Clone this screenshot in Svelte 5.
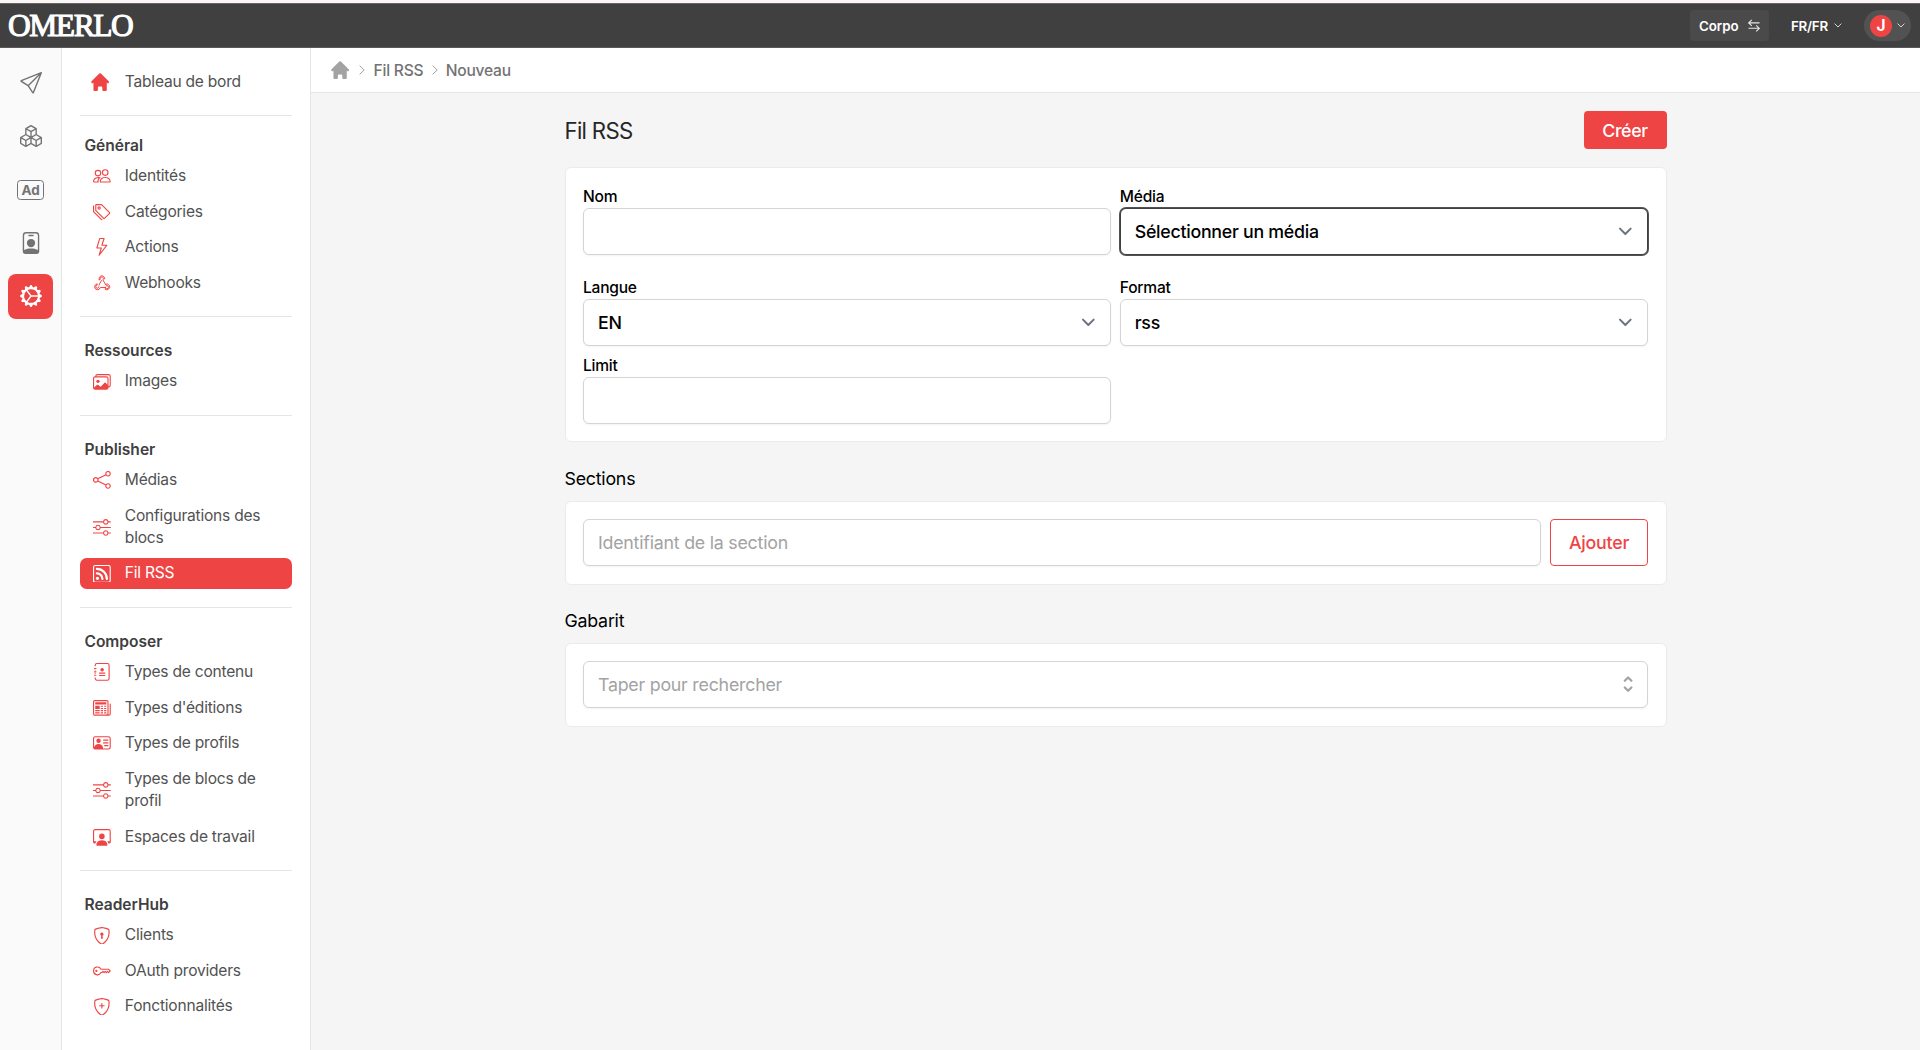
<script>
  // Inner markup of the icons, all on a 16x16 grid
  const shield =
    '<path d="M5.338 1.59a61 61 0 0 0-2.837.856.48.48 0 0 0-.328.39c-.554 4.157.726 7.19 2.253 9.188a10.7 10.7 0 0 0 2.287 2.233c.346.244.652.42.893.533q.18.085.293.118a1 1 0 0 0 .101.025 1 1 0 0 0 .1-.025q.114-.034.294-.118c.24-.113.547-.29.893-.533a10.7 10.7 0 0 0 2.287-2.233c1.527-1.997 2.807-5.031 2.253-9.188a.48.48 0 0 0-.328-.39c-.651-.213-1.75-.56-2.837-.855C9.552 1.29 8.531 1.067 8 1.067c-.53 0-1.552.223-2.662.524zM5.072.56C6.157.265 7.31 0 8 0s1.843.265 2.928.56c1.11.3 2.229.655 2.887.87a1.54 1.54 0 0 1 1.044 1.262c.596 4.477-.787 7.795-2.465 9.99a11.8 11.8 0 0 1-2.517 2.453 7 7 0 0 1-1.048.625c-.28.132-.581.24-.829.24s-.548-.108-.829-.24a7 7 0 0 1-1.048-.625 11.8 11.8 0 0 1-2.517-2.453C1.928 10.487.545 7.169 1.141 2.692A1.54 1.54 0 0 1 2.185 1.43 63 63 0 0 1 5.072.56"/>';

  const icons = {
    send: '<path d="M15.854.146a.5.5 0 0 1 .11.54l-5.819 14.547a.75.75 0 0 1-1.329.124l-3.178-4.995L.643 7.184a.75.75 0 0 1 .124-1.33L15.314.037a.5.5 0 0 1 .54.11ZM6.636 10.07l2.761 4.338L14.13 2.576 6.636 10.07Zm6.787-8.201L1.591 6.602l4.339 2.76 7.494-7.493Z"/>',
    boxes: '<path d="M7.752.066a.5.5 0 0 1 .496 0l3.75 2.143a.5.5 0 0 1 .252.434v3.995l3.498 2A.5.5 0 0 1 16 9.07v4.286a.5.5 0 0 1-.252.434l-3.75 2.143a.5.5 0 0 1-.496 0l-3.502-2-3.502 2.001a.5.5 0 0 1-.496 0l-3.75-2.143A.5.5 0 0 1 0 13.357V9.071a.5.5 0 0 1 .252-.434L3.75 6.638V2.643a.5.5 0 0 1 .252-.434zM4.25 7.504 1.508 9.071l2.742 1.567 2.742-1.567zM7.5 9.933l-2.75 1.571v3.134l2.75-1.571zm1 3.134 2.75 1.571v-3.134L8.5 9.933zm.508-3.996 2.742 1.567 2.742-1.567-2.742-1.567zm2.242-2.433V3.504L8.5 5.076V8.21zM7.5 8.21V5.076L4.75 3.504v3.134zM5.258 2.643 8 4.21l2.742-1.567L8 1.076zM15 9.933l-2.75 1.571v3.134L15 13.067zM3.75 14.638v-3.134L1 9.933v3.134z"/>',
    badge: '<path d="M6.5 2a.5.5 0 0 0 0 1h3a.5.5 0 0 0 0-1zM11 8a3 3 0 1 1-6 0 3 3 0 0 1 6 0"/><path d="M4.5 0A2.5 2.5 0 0 0 2 2.5V14a2 2 0 0 0 2 2h8a2 2 0 0 0 2-2V2.5A2.5 2.5 0 0 0 11.5 0zM3 2.5A1.5 1.5 0 0 1 4.5 1h7A1.5 1.5 0 0 1 13 2.5v10.795a4.2 4.2 0 0 0-.776-.492C11.392 12.387 10.063 12 8 12s-3.392.387-4.224.803a4.2 4.2 0 0 0-.776.492z"/>',
    gear: '<path d="M7.068.727c.243-.97 1.62-.97 1.864 0l.071.286a.96.96 0 0 0 1.622.434l.205-.211c.695-.719 1.888-.03 1.613.931l-.08.284a.96.96 0 0 0 1.187 1.187l.283-.081c.96-.275 1.65.918.931 1.613l-.211.205a.96.96 0 0 0 .434 1.622l.286.071c.97.243.97 1.62 0 1.864l-.286.071a.96.96 0 0 0-.434 1.622l.211.205c.719.695.03 1.888-.931 1.613l-.284-.08a.96.96 0 0 0-1.187 1.187l.081.283c.275.96-.918 1.65-1.613.931l-.205-.211a.96.96 0 0 0-1.622.434l-.071.286c-.243.97-1.62.97-1.864 0l-.071-.286a.96.96 0 0 0-1.622-.434l-.205.211c-.695.719-1.888.03-1.613-.931l.08-.284a.96.96 0 0 0-1.186-1.187l-.284.081c-.96.275-1.65-.918-.931-1.613l.211-.205a.96.96 0 0 0-.434-1.622l-.286-.071c-.97-.243-.97-1.62 0-1.864l.286-.071a.96.96 0 0 0 .434-1.622l-.211-.205c-.719-.695-.03-1.888.931-1.613l.284.08a.96.96 0 0 0 1.187-1.186l-.081-.284c-.275-.96.918-1.65 1.613-.931l.205.211a.96.96 0 0 0 1.622-.434zM12.973 8.5H8.25l-2.834 3.779A4.998 4.998 0 0 0 12.973 8.5m0-1a4.998 4.998 0 0 0-7.557-3.779l2.834 3.78zM5.048 3.967l-.087.065zm-.431.355A4.98 4.98 0 0 0 3.002 8c0 1.455.622 2.765 1.615 3.678L7.375 8zm.344 7.646.087.065z"/>',
    people: '<path d="M15 14s1 0 1-1-1-4-5-4-5 3-5 4 1 1 1 1zm-7.978-1L7 12.996c.001-.264.167-1.03.76-1.72C8.312 10.629 9.282 10 11 10c1.717 0 2.687.63 3.24 1.276.593.69.758 1.457.76 1.72l-.008.002-.014.002zM11 7a2 2 0 1 0 0-4 2 2 0 0 0 0 4m3-2a3 3 0 1 1-6 0 3 3 0 0 1 6 0M6.936 9.28a6 6 0 0 0-1.23-.247A7 7 0 0 0 5 9c-4 0-5 3-5 4q0 1 1 1h4.216A2.24 2.24 0 0 1 5 13c0-1.01.377-2.042 1.09-2.904.243-.294.526-.569.846-.816M4.92 10A5.5 5.5 0 0 0 4 13H1c0-.26.164-1.03.76-1.724.545-.636 1.492-1.256 3.16-1.275ZM1.5 5.5a3 3 0 1 1 6 0 3 3 0 0 1-6 0m3-2a2 2 0 1 0 0 4 2 2 0 0 0 0-4"/>',
    tags: '<path d="M3 2v4.586l7 7L14.586 9l-7-7zM2 2a1 1 0 0 1 1-1h4.586a1 1 0 0 1 .707.293l7 7a1 1 0 0 1 0 1.414l-4.586 4.586a1 1 0 0 1-1.414 0l-7-7A1 1 0 0 1 2 6.586z"/><path d="M5.5 5a.5.5 0 1 1 0-1 .5.5 0 0 1 0 1m0 1a1.5 1.5 0 1 0 0-3 1.5 1.5 0 0 0 0 3M1 7.086a1 1 0 0 0 .293.707L8.75 15.25l-.043.043a1 1 0 0 1-1.414 0l-7-7A1 1 0 0 1 0 7.586V3a1 1 0 0 1 1-1z"/>',
    lightning: '<path d="M5.52.359A.5.5 0 0 1 6 0h4a.5.5 0 0 1 .474.658L8.694 6H12.5a.5.5 0 0 1 .395.807l-7 9a.5.5 0 0 1-.873-.454L6.823 9.5H3.5a.5.5 0 0 1-.48-.641zM6.374 1 4.168 8.5H7.5a.5.5 0 0 1 .478.647L6.78 13.04 11.478 7H8a.5.5 0 0 1-.474-.658L9.306 1z"/>',
    webhook: '<g fill="none" stroke="currentColor" stroke-width=".9" stroke-linecap="round" stroke-linejoin="round"><path d="M5.6 5.2A2.6 2.6 0 1 1 10.6 4.4M5.6 5.2l1-.4a1.5 1.5 0 1 1 2.3.5l2.5 4.3M7.6 5.9l-2.3 4.3"/><path d="M3.6 9A2.6 2.6 0 1 0 6.6 12.2h4.8M3.6 9v1a1.4 1.4 0 1 0 1.7 1.5"/><path d="M11.2 9.3a2.6 2.6 0 1 1-.5 4.2l.8-.7a1.4 1.4 0 1 0 .2-2.1"/></g>',
    images: '<path d="M4.502 9a1.5 1.5 0 1 0 0-3 1.5 1.5 0 0 0 0 3"/><path d="M14.002 13a2 2 0 0 1-2 2h-10a2 2 0 0 1-2-2V5A2 2 0 0 1 2 3a2 2 0 0 1 2-2h10a2 2 0 0 1 2 2v8a2 2 0 0 1-1.998 2M14 2H4a1 1 0 0 0-1 1h9.002a2 2 0 0 1 2 2v7A1 1 0 0 0 15 11V3a1 1 0 0 0-1-1M2.002 4a1 1 0 0 0-1 1v8l2.646-2.354a.5.5 0 0 1 .63-.062l2.66 1.773 3.71-3.71a.5.5 0 0 1 .577-.094l1.777 1.947V5a1 1 0 0 0-1-1z"/>',
    share: '<path d="M13.5 1a1.5 1.5 0 1 0 0 3 1.5 1.5 0 0 0 0-3M11 2.5a2.5 2.5 0 1 1 .603 1.628l-6.718 3.12a2.5 2.5 0 0 1 0 1.504l6.718 3.12a2.5 2.5 0 1 1-.488.876l-6.718-3.12a2.5 2.5 0 1 1 0-3.256l6.718-3.12A2.5 2.5 0 0 1 11 2.5m-8.5 4a1.5 1.5 0 1 0 0 3 1.5 1.5 0 0 0 0-3m11 5.5a1.5 1.5 0 1 0 0 3 1.5 1.5 0 0 0 0-3"/>',
    sliders: '<path d="M11.5 2a1.5 1.5 0 1 0 0 3 1.5 1.5 0 0 0 0-3M9.05 3a2.5 2.5 0 0 1 4.9 0H16v1h-2.05a2.5 2.5 0 0 1-4.9 0H0V3zM4.5 7a1.5 1.5 0 1 0 0 3 1.5 1.5 0 0 0 0-3M2.05 8a2.5 2.5 0 0 1 4.9 0H16v1H6.95a2.5 2.5 0 0 1-4.9 0H0V8zm9.45 4a1.5 1.5 0 1 0 0 3 1.5 1.5 0 0 0 0-3m-2.45 1a2.5 2.5 0 0 1 4.9 0H16v1h-2.05a2.5 2.5 0 0 1-4.9 0H0v-1z"/>',
    rss: '<path d="M14 1a1 1 0 0 1 1 1v12a1 1 0 0 1-1 1H2a1 1 0 0 1-1-1V2a1 1 0 0 1 1-1zM2 0a2 2 0 0 0-2 2v12a2 2 0 0 0 2 2h12a2 2 0 0 0 2-2V2a2 2 0 0 0-2-2z"/><path d="M5.5 12a1.5 1.5 0 1 1-3 0 1.5 1.5 0 0 1 3 0m-3-8.5a1 1 0 0 1 1-1c5.523 0 10 4.477 10 10a1 1 0 1 1-2 0 8 8 0 0 0-8-8 1 1 0 0 1-1-1m0 4a1 1 0 0 1 1-1 6 6 0 0 1 6 6 1 1 0 1 1-2 0 4 4 0 0 0-4-4 1 1 0 0 1-1-1"/>',
    journal: '<path fill="none" stroke="currentColor" d="M2 3V2A1.5 1.5 0 0 1 3.5.5H13A1.5 1.5 0 0 1 14.5 2v12a1.5 1.5 0 0 1-1.5 1.5H3.5A1.5 1.5 0 0 1 2 14v-1"/><path d="M1 4.5h2v1H1zM1 7.5h2v1H1zM1 10.5h2v1H1zM1.500 6h1v.8h-1zM1.500 9.200h1v.8h-1zM5.500 8.600h5.500v1H5.500zM5.500 10.700h5.500v1H5.500z"/><circle cx="8.200" cy="6" r="1.600"/>',
    newspaper: '<path d="M0 2.5A1.5 1.5 0 0 1 1.5 1h11A1.5 1.5 0 0 1 14 2.5v10.528c0 .3-.05.654-.238.972h.738a.5.5 0 0 0 .5-.5v-9a.5.5 0 0 1 1 0v9a1.5 1.5 0 0 1-1.5 1.5H1.497A1.497 1.497 0 0 1 0 13.5zM12 14c.37 0 .654-.211.853-.441.092-.106.147-.279.147-.531V2.5a.5.5 0 0 0-.5-.5h-11a.5.5 0 0 0-.5.5v11c0 .278.223.5.497.5z"/><path d="M2 3h10v2H2zm0 3h4v3H2zm0 4h4v1H2zm0 2h4v1H2zm5-6h2v1H7zm3 0h2v1h-2zM7 8h2v1H7zm3 0h2v1h-2zm-3 2h2v1H7zm3 0h2v1h-2zm-3 2h2v1H7zm3 0h2v1h-2z"/>',
    vcard: '<path d="M5 8a2 2 0 1 0 0-4 2 2 0 0 0 0 4m4-2.5a.5.5 0 0 1 .5-.5h4a.5.5 0 0 1 0 1h-4a.5.5 0 0 1-.5-.5M9 8a.5.5 0 0 1 .5-.5h4a.5.5 0 0 1 0 1h-4A.5.5 0 0 1 9 8m1 2.5a.5.5 0 0 1 .5-.5h3a.5.5 0 0 1 0 1h-3a.5.5 0 0 1-.5-.5"/><path d="M2 2a2 2 0 0 0-2 2v8a2 2 0 0 0 2 2h12a2 2 0 0 0 2-2V4a2 2 0 0 0-2-2zM1 4a1 1 0 0 1 1-1h12a1 1 0 0 1 1 1v8a1 1 0 0 1-1 1H8.960q.04-.245.04-.5C9 10.567 7.210 9 5 9c-2.086 0-3.800 1.398-3.984 3.181A1 1 0 0 1 1 12z"/>',
    workspace: '<path d="M4 16s-1 0-1-1 1-4 5-4 5 3 5 4-1 1-1 1zm4-5.950a2.500 2.500 0 1 0 0-5 2.500 2.500 0 0 0 0 5"/><path d="M2 1a2 2 0 0 0-2 2v9.500A1.500 1.500 0 0 0 1.500 14h.653a5.400 5.400 0 0 1 1.066-2H1V3a1 1 0 0 1 1-1h12a1 1 0 0 1 1 1v9h-2.219c.554.654.890 1.373 1.066 2h.653a1.500 1.500 0 0 0 1.500-1.500V3a2 2 0 0 0-2-2z"/>',
    shieldLock: shield + '<path d="M9.5 6.5a1.5 1.5 0 0 1-1 1.415l.385 1.99a.5.5 0 0 1-.491.595h-.788a.5.5 0 0 1-.49-.595l.384-1.99a1.5 1.5 0 1 1 2-1.415"/>',
    shieldPlus: shield + '<path d="M8 4.5a.5.5 0 0 1 .5.5v1.500H10a.5.5 0 0 1 0 1H8.500V9a.5.5 0 0 1-1 0V7.500H6a.5.5 0 0 1 0-1h1.500V5a.5.5 0 0 1 .5-.5"/>',
    key: '<path d="M0 8a4 4 0 0 1 7.465-2H14a.5.5 0 0 1 .354.146l1.5 1.5a.5.5 0 0 1 0 .708l-1.5 1.5a.5.5 0 0 1-.708 0L13 9.207l-.646.647a.5.5 0 0 1-.708 0L11 9.207l-.646.647a.5.5 0 0 1-.708 0L9 9.207l-.646.647A.5.5 0 0 1 8 10h-.535A4 4 0 0 1 0 8m4-3a3 3 0 1 0 2.712 4.285A.5.5 0 0 1 7.163 9h.63l.853-.854a.5.5 0 0 1 .708 0l.646.647.646-.647a.5.5 0 0 1 .708 0l.646.647.646-.647a.5.5 0 0 1 .708 0l.646.647.793-.793-1-1h-6.63a.5.5 0 0 1-.451-.285A3 3 0 0 0 4 5"/><path d="M4 8a1 1 0 1 1-2 0 1 1 0 0 1 2 0"/>',
  };

  const rail = ['send', 'boxes', 'ad', 'badge', 'gear'];

  const groups = [
    {
      title: 'Général',
      items: [
        { icon: 'people', label: 'Identités' },
        { icon: 'tags', label: 'Catégories' },
        { icon: 'lightning', label: 'Actions' },
        { icon: 'webhook', label: 'Webhooks' },
      ],
    },
    {
      title: 'Ressources',
      items: [{ icon: 'images', label: 'Images' }],
    },
    {
      title: 'Publisher',
      items: [
        { icon: 'share', label: 'Médias' },
        { icon: 'sliders', label: 'Configurations des blocs' },
        { icon: 'rss', label: 'Fil RSS', active: true },
      ],
    },
    {
      title: 'Composer',
      items: [
        { icon: 'journal', label: 'Types de contenu' },
        { icon: 'newspaper', label: "Types d'éditions" },
        { icon: 'vcard', label: 'Types de profils' },
        { icon: 'sliders', label: 'Types de blocs de profil' },
        { icon: 'workspace', label: 'Espaces de travail' },
      ],
    },
    {
      title: 'ReaderHub',
      items: [
        { icon: 'shieldLock', label: 'Clients' },
        { icon: 'key', label: 'OAuth providers' },
        { icon: 'shieldPlus', label: 'Fonctionnalités' },
      ],
    },
  ];

  let nom = $state('');
  let limit = $state('');
  let section = $state('');
  let gabarit = $state('');
</script>

{#snippet home()}
  <svg class="home" viewBox="0 0 20 20" fill="currentColor">
    <path d="M10.707 2.293a1 1 0 00-1.414 0l-7 7a1 1 0 001.414 1.414L4 10.414V17a1 1 0 001 1h2a1 1 0 001-1v-2a1 1 0 011-1h2a1 1 0 011 1v2a1 1 0 001 1h2a1 1 0 001-1v-6.586l.293.293a1 1 0 001.414-1.414l-7-7z" />
  </svg>
{/snippet}

{#snippet caret()}
  <svg class="caret" viewBox="0 0 8 5"><path d="M.6.6 4 4 7.400.6" /></svg>
{/snippet}

{#snippet crumbSep()}
  <svg class="crumb-sep" viewBox="0 0 6 10"><path d="M.6.6 5.200 5 .6 9.400" /></svg>
{/snippet}

{#snippet select(label, value, focused)}
  <div class="field">
    <span class="label">{label}</span>
    <button type="button" class="control select" class:focused>
      <span>{value}</span>
      <svg viewBox="0 0 20 20"><path d="M6 8l4 4 4-4" /></svg>
    </button>
  </div>
{/snippet}

<div class="app">
  <header>
    <div class="logo">OMERLO</div>
    <div class="tools">
      <button type="button" class="workspace">
        <span>Corpo</span>
        <svg viewBox="0 0 12 13"><path d="M3.800.8.7 3.900h10.800M.7 3.900l3.100 3M8.200 6.300l3.100 3H.5M11.300 9.300l-3.100 3" /></svg>
      </button>
      <button type="button" class="locale">FR/FR {@render caret()}</button>
      <button type="button" class="account">
        <span class="avatar">J</span>
        {@render caret()}
      </button>
    </div>
  </header>

  <div class="body">
    <nav class="rail">
      {#each rail as name}
        <a href="#{name}" class:active={name === 'gear'}>
          {#if name === 'ad'}
            <span class="ad">Ad</span>
          {:else}
            <svg viewBox="0 0 16 16" fill="currentColor">{@html icons[name]}</svg>
          {/if}
        </a>
      {/each}
    </nav>

    <aside>
      <a class="item top" href="#dashboard">
        {@render home()}
        <span>Tableau de bord</span>
      </a>
      {#each groups as group}
        <section class="group">
          <h3>{group.title}</h3>
          <ul>
            {#each group.items as item}
              <li>
                <a class="item" class:active={item.active} href="#{item.icon}">
                  <svg viewBox="0 0 16 16" fill="currentColor">{@html icons[item.icon]}</svg>
                  <span>{item.label}</span>
                </a>
              </li>
            {/each}
          </ul>
        </section>
      {/each}
    </aside>

    <main>
      <div class="breadcrumb">
        {@render home()}
        {@render crumbSep()}
        <span>Fil RSS</span>
        {@render crumbSep()}
        <span>Nouveau</span>
      </div>

      <div class="content">
        <div class="title-row">
          <h1>Fil RSS</h1>
          <button type="button" class="primary">Créer</button>
        </div>

        <div class="card form">
          <label class="field">
            <span class="label">Nom</span>
            <input class="control" bind:value={nom} />
          </label>
          {@render select('Média', 'Sélectionner un média', true)}
          {@render select('Langue', 'EN', false)}
          {@render select('Format', 'rss', false)}
          <label class="field">
            <span class="label">Limit</span>
            <input class="control" bind:value={limit} />
          </label>
        </div>

        <h2>Sections</h2>
        <div class="card row">
          <input class="control" placeholder="Identifiant de la section" bind:value={section} />
          <button type="button" class="outline">Ajouter</button>
        </div>

        <h2>Gabarit</h2>
        <div class="card row">
          <div class="combo">
            <input class="control" placeholder="Taper pour rechercher" bind:value={gabarit} />
            <svg viewBox="0 0 20 20" fill="currentColor">
              <path d="M10 3a1 1 0 01.707.293l3 3a1 1 0 01-1.414 1.414L10 5.414 7.707 7.707a1 1 0 01-1.414-1.414l3-3A1 1 0 0110 3zm-3.707 9.293a1 1 0 011.414 0L10 14.586l2.293-2.293a1 1 0 011.414 1.414l-3 3a1 1 0 01-1.414 0l-3-3a1 1 0 010-1.414z" />
            </svg>
          </div>
        </div>
      </div>
    </main>
  </div>
</div>

<style>
  :global(html) {
    font-size: 17.78px;
  }

  :global(body) {
    margin: 0;
    overflow: hidden;
  }

  .app {
    display: flex;
    flex-direction: column;
    box-sizing: border-box;
    height: 100vh;
    border-top: 3px solid #fbf6f6;
    font-family: Inter, 'Liberation Sans', sans-serif;
    letter-spacing: -0.22px;
    color: #000;
    background: #f5f5f5;
  }

  .app :global(*) {
    box-sizing: border-box;
  }

  button,
  input {
    font: inherit;
    letter-spacing: inherit;
    margin: 0;
  }

  button {
    cursor: pointer;
  }

  svg {
    flex: none;
    display: block;
  }

  a {
    color: inherit;
    text-decoration: none;
  }

  header {
    flex: none;
    display: flex;
    align-items: center;
    justify-content: space-between;
    height: 45px;
    padding: 0 9px 0 8px;
    background: #404040;
    border-top: 1px solid #6a6365;
    border-bottom: 1px solid #5c5759;
    color: #fff;
  }

  .logo {
    font-family: 'Liberation Serif', serif;
    font-size: 31.5px;
    line-height: 42px;
    letter-spacing: -1.45px;
    -webkit-text-stroke: 1.1px #fff;
  }

  .tools {
    display: flex;
    align-items: center;
    font-size: 13.33px;
    font-weight: 600;
    letter-spacing: 0;
  }

  .tools button {
    display: flex;
    align-items: center;
    height: 31px;
    border: 0;
    color: #fff;
    background: none;
  }

  .tools .workspace {
    width: 79px;
    padding: 0 9px;
    justify-content: space-between;
    border-radius: 4px;
    background: #4a4a4a;
  }

  .workspace svg {
    width: 12px;
    height: 13px;
    fill: none;
    stroke: #e5e5e5;
    stroke-width: 1.1;
  }

  .tools .locale {
    gap: 6px;
    margin-left: 22px;
    padding: 0;
    letter-spacing: -0.2px;
  }

  .caret {
    width: 8px;
    height: 5px;
    fill: none;
    stroke: #d4d4d4;
    stroke-width: 1;
  }

  .tools .account {
    width: 47px;
    margin-left: 22px;
    padding: 0 6px;
    justify-content: space-between;
    border-radius: 16px;
    background: #525252;
  }

  .avatar {
    width: 22px;
    height: 22px;
    border-radius: 50%;
    background: #ef4444;
    font-size: 15.5px;
    font-weight: 700;
    line-height: 22px;
    text-align: center;
  }

  .body {
    flex: 1;
    display: flex;
    min-height: 0;
  }

  .rail {
    flex: none;
    display: flex;
    flex-direction: column;
    align-items: flex-start;
    gap: 8.4px;
    width: 62px;
    padding: 12.3px 0 0 8px;
    background: #fafafa;
    border-right: 1px solid #e5e5e5;
    color: #737373;
  }

  .rail a {
    display: flex;
    align-items: center;
    justify-content: center;
    width: 45px;
    height: 45px;
    border-radius: 8px;
  }

  .rail a.active {
    background: #ef4444;
    color: #fff;
  }

  .rail svg {
    width: 22px;
    height: 22px;
  }

  .ad {
    width: 27px;
    height: 20px;
    border: 1.5px solid #737373;
    border-radius: 3.5px;
    font-size: 13.5px;
    font-weight: 700;
    line-height: 18px;
    text-align: center;
  }

  aside {
    flex: none;
    width: 249px;
    padding: 18.4px 18px 0;
    border-right: 1px solid #e5e5e5;
    background: #fff;
  }

  .item {
    display: flex;
    align-items: center;
    gap: 0.775rem;
    padding: 0.25rem 0.75rem;
    border-radius: 0.375rem;
    font-size: 0.875rem;
    line-height: 1.25rem;
    color: #525252;
  }

  .item span {
    flex: 1;
  }

  .item svg {
    width: 1rem;
    height: 1rem;
    color: #ef4444;
  }

  .item .home,
  .home {
    width: 1.25rem;
    height: 1.25rem;
  }

  .item.top {
    padding-left: 0.5rem;
  }

  .item.active {
    background: #ef4444;
    color: #fff;
  }

  .item.active svg {
    color: #fff;
  }

  .group {
    margin-top: 1rem;
    padding-top: 1rem;
    border-top: 1px solid #e5e5e5;
  }

  .item.top + .group {
    padding-top: 0.75rem;
  }

  h1,
  h2,
  h3,
  ul {
    margin: 0;
    padding: 0;
    list-style: none;
  }

  h3 {
    padding: 0 0.25rem;
    font-size: 0.875rem;
    font-weight: 600;
    line-height: 1.75rem;
    letter-spacing: 0;
    color: #404040;
  }

  li + li {
    margin-top: 0.25rem;
  }

  main {
    flex: 1;
    min-width: 0;
  }

  .breadcrumb {
    display: flex;
    align-items: center;
    height: 45px;
    padding-left: 18px;
    border-bottom: 1px solid #e5e5e5;
    background: #fff;
    font-size: 0.875rem;
    font-weight: 500;
    color: #737373;
  }

  .breadcrumb .home {
    color: #a3a3a3;
  }

  .crumb-sep {
    width: 6px;
    height: 10px;
    margin: 0 8.2px;
    fill: none;
    stroke: #a3a3a3;
    stroke-width: 1;
  }

  .content {
    width: 1102px;
    margin: 0 auto;
    padding-top: 18px;
  }

  .title-row {
    display: flex;
    align-items: center;
    justify-content: space-between;
    margin-bottom: 18px;
  }

  h1 {
    font-size: 1.25rem;
    font-weight: 400;
    letter-spacing: -0.7px;
    color: #262626;
  }

  .primary {
    width: 83px;
    height: 38px;
    border: 0;
    border-radius: 4px;
    background: #ef4444;
    color: #fff;
    font-size: 1rem;
    font-weight: 500;
    letter-spacing: -0.4px;
  }

  .card {
    padding: 17.5px;
    border: 1px solid #ebebeb;
    border-radius: 6px;
    background: #fff;
  }

  .form {
    display: grid;
    grid-template-columns: 1fr 1fr;
    column-gap: 8.5px;
    height: 275px;
    align-content: start;
  }

  .field {
    display: block;
    height: 91px;
  }

  .field:nth-child(n + 3) {
    height: 78px;
  }

  .label {
    display: block;
    height: 22.5px;
    font-size: 0.875rem;
    font-weight: 500;
    line-height: 22px;
  }

  .control {
    display: block;
    width: 100%;
    height: 47px;
    padding: 0 14px;
    border: 1px solid #d4d4d4;
    border-radius: 6px;
    outline: none;
    background: #fff;
    box-shadow: 0 1px 2px rgba(0, 0, 0, 0.05);
    font-size: 1rem;
  }

  .control::placeholder {
    color: #a3a3a3;
    opacity: 1;
  }

  .select {
    display: flex;
    align-items: center;
    justify-content: space-between;
    padding-right: 8.5px;
    font-weight: 500;
    letter-spacing: -0.27px;
    color: #000;
  }

  .select svg {
    width: 1.5rem;
    height: 1.5rem;
    fill: none;
    stroke: #6b7280;
    stroke-width: 1.5;
    stroke-linecap: round;
    stroke-linejoin: round;
  }

  .select.focused {
    border-color: #404040;
    box-shadow: 0 0 0 1px #525252;
  }

  h2 {
    margin: 25px 0 10.5px;
    font-size: 1rem;
    font-weight: 400;
    line-height: 23px;
  }

  .row {
    display: flex;
    gap: 9px;
    height: 84px;
    padding-top: 17px;
  }

  .row + h2 {
    margin-top: 24.5px;
  }

  .row .control {
    flex: 1;
  }

  .outline {
    flex: none;
    width: 98px;
    height: 47px;
    padding: 0;
    border: 1px solid #ef4444;
    border-radius: 4px;
    background: #fff;
    color: #ef4444;
    font-size: 1rem;
    font-weight: 500;
  }

  .combo {
    position: relative;
    flex: 1;
  }

  .combo svg {
    position: absolute;
    top: 12.5px;
    right: 8.5px;
    width: 1.25rem;
    height: 1.25rem;
    color: #a3a3a3;
  }
</style>
